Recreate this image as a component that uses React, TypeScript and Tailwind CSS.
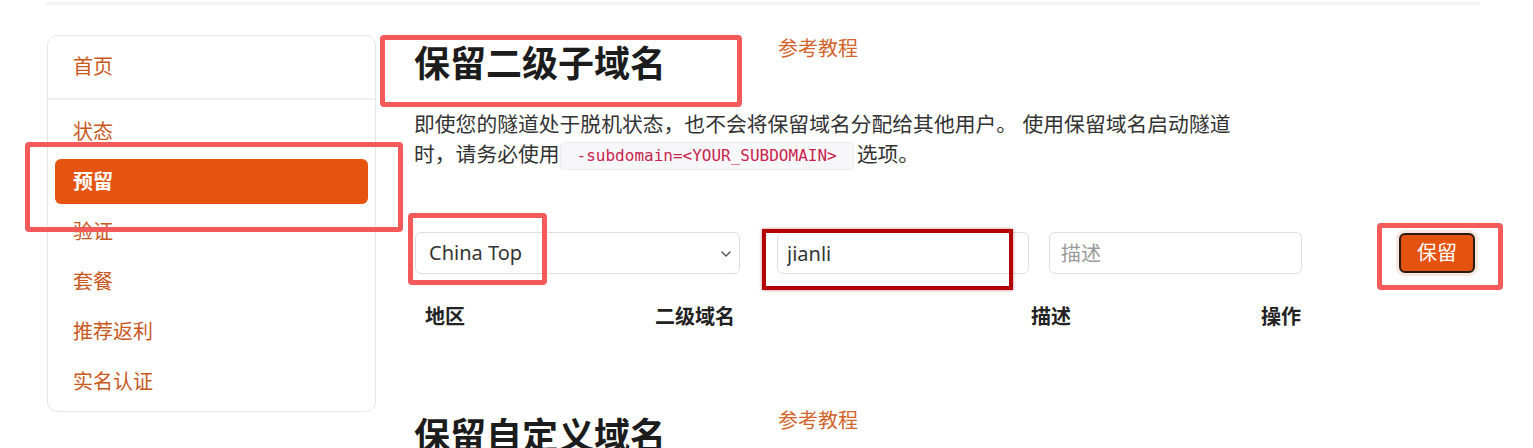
import { ChevronDown } from "lucide-react"

const font = { fontFamily: '"Noto Sans", "Noto Sans CJK SC", sans-serif' }

const items = ["状态", "预留", "验证", "套餐", "推荐返利", "实名认证"]

function Sidebar() {
  return (
    <div className="w-[329px] h-[377px] rounded-[10px] border border-[#e6e6e6] flex flex-col">
      <div className="h-[64px] flex items-center pl-[25px] border-b-2 border-[#efefef] text-[20px] text-[#c9581d]">首页</div>
      <div className="flex flex-col gap-[5px] px-[7px] pt-[9px]">
        {items.map((t) =>
          t === "预留" ? (
            <div key={t} className="h-[45px] flex items-center pl-[18px] rounded-[6px] bg-[#e5530f] text-white text-[20px] font-bold">{t}</div>
          ) : (
            <div key={t} className="h-[45px] flex items-center pl-[18px] text-[20px] text-[#c9581d]">{t}</div>
          )
        )}
      </div>
    </div>
  )
}

function SectionTitle({ title }: { title: string }) {
  return (
    <div className="flex items-start">
      <h2 className="w-[364px] mt-[7px] text-[36px] leading-[44px] font-bold text-[#1c1c1c]">{title}</h2>
      <a className="text-[20px] leading-[28px] text-[#d2642c]">参考教程</a>
    </div>
  )
}

export default function App() {
  return (
    <div className="relative w-[1533px] h-[448px] overflow-hidden bg-white" style={font}>
      <div className="ml-[45px] mt-[2px] w-[1435px] h-[3px] bg-[#f5f5f5]" />
      <div className="flex pl-[47px] mt-[30px]">
        <Sidebar />
        <div className="ml-[38px] w-[1066px] flex flex-col">
          <SectionTitle title="保留二级子域名" />
          <p className="mt-[23px] w-[825px] text-[20.8px] leading-[30px] text-[#333]">
            即使您的隧道处于脱机状态，也不会将保留域名分配给其他用户。 使用保留域名启动隧道时，请务必使用
            <code className="inline-block align-middle mr-[3px] h-[28px] px-[16px] leading-[26px] rounded-[4px] border border-[#ececec] bg-[#f7f7f9] text-[16px] text-[#c7254e]" style={{ fontFamily: '"DejaVu Sans Mono", monospace' }}>
              -subdomain=&lt;YOUR_SUBDOMAIN&gt;
            </code>
            选项。
          </p>
          <div className="mt-[62px] flex items-center h-[42px]">
            <div className="relative ml-[1px] w-[325px] h-[42px]">
              <select className="w-full h-full appearance-none rounded-[6px] border border-[#dedede] bg-white pl-[13px] text-[20px] text-[#333]" defaultValue="ct">
                <option value="ct">China Top</option>
              </select>
              <ChevronDown className="absolute right-[6px] top-[14px] w-[16px] h-[16px] text-[#555]" strokeWidth={2.2} />
            </div>
            <input className="ml-[37px] w-[252px] h-[42px] rounded-[6px] border border-[#dedede] pl-[9px] text-[20px] text-[#333] outline-none" defaultValue="jianli" />
            <input className="ml-[20px] w-[253px] h-[42px] rounded-[6px] border border-[#dedede] pl-[11px] text-[20px] text-[#333] placeholder:text-[#9a9a9a] outline-none" placeholder="描述" />
            <button className="ml-[97px] w-[76px] h-[40px] rounded-[6px] border-2 border-[#2b1a12] bg-[#e4520f] text-white text-[20px] shadow-[0_0_0_3px_#f5e6de]">保留</button>
          </div>
          <div className="mt-[29px] grid grid-cols-[230px_376px_230px_1fr] text-[20px] leading-[28px] font-bold text-[#222] ml-[1px]">
            <div className="pl-[10px]">地区</div>
            <div className="pl-[10px]">二级域名</div>
            <div className="pl-[10px]">描述</div>
            <div className="pl-[10px]">操作</div>
          </div>
          <div className="mt-[76px]">
            <SectionTitle title="保留自定义域名" />
          </div>
        </div>
      </div>

      <div className="absolute left-[380px] top-[35px] w-[362px] h-[72px] rounded-[4px] border-[5px] border-[#f55a5a]" />
      <div className="absolute left-[25px] top-[142px] w-[378px] h-[90px] rounded-[4px] border-[5px] border-[#f55a5a]" />
      <div className="absolute left-[408px] top-[213px] w-[139px] h-[72px] rounded-[4px] border-[5px] border-[#f55a5a]" />
      <div className="absolute left-[762px] top-[229px] w-[251px] h-[61px] border-[4px] border-[#b30303] shadow-[0_0_3px_rgba(120,0,0,0.5)]" />
      <div className="absolute left-[1377px] top-[223px] w-[126px] h-[67px] rounded-[4px] border-[5px] border-[#f55a5a]" />
    </div>
  )
}
